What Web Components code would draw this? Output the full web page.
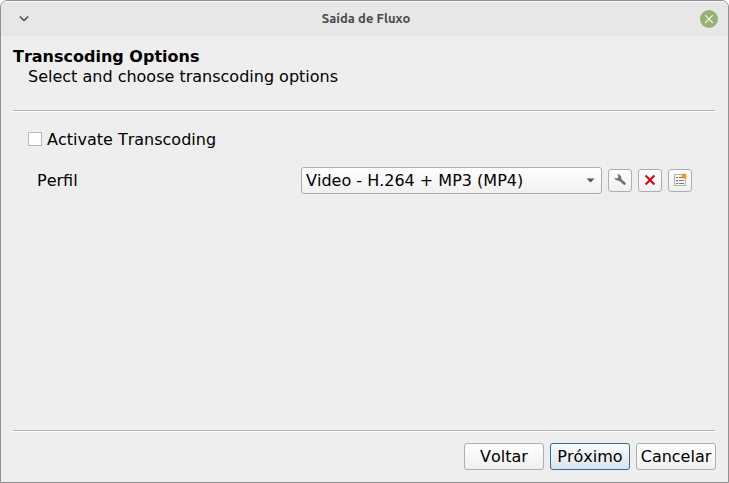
<!DOCTYPE html>
<html lang="pt">
<head>
<meta charset="utf-8">
<title>Saída de Fluxo</title>
<style>
html,body{margin:0;height:100%;overflow:hidden;background:#fff}
body{font:16px/20px "DejaVu Sans",sans-serif;font-kerning:none;color:#000}
</style>
</head>
<body>
<stream-wizard></stream-wizard>
<script>
const define = (name, html) => {
  const t = document.createElement('template');
  t.innerHTML = html;
  customElements.define(name, class extends HTMLElement {
    constructor() {
      super();
      this.attachShadow({ mode: 'open' }).append(t.content.cloneNode(true));
    }
  });
};

define('title-bar', `
<style>
:host{display:grid;grid-template-columns:46px 1fr 46px;align-items:center;height:35px;background:#e7e7e7;box-shadow:inset 0 1px #f9f9f9;box-sizing:border-box}
.t{text-align:center;font:600 13px/20px Ubuntu,"Noto Sans",sans-serif;letter-spacing:.05px;padding:0 0 2px 3px;color:#4a4a4a;white-space:nowrap}
svg{display:block}
.m{margin-left:17px}
.c{margin-left:18px}
</style>
<svg class="m" width="12" height="12" viewBox="0 0 12 12"><path d="M1.8 3.5l4.2 4 4.2-4" fill="none" stroke="#444" stroke-width="1.3"/></svg>
<div class="t"><slot></slot></div>
<svg class="c" width="18" height="18" viewBox="0 0 18 18"><circle cx="9" cy="9" r="9" fill="#92b372"/><path d="M5.2 5.2l7.6 7.6M12.8 5.2l-7.6 7.6" stroke="#fff" stroke-width="1.1"/></svg>`);

define('rule-line', `<style>:host{display:block;height:1px;background:#b4b4b4;border-bottom:1px solid #fff;margin:0 13px 0 12px}</style>`);

define('check-option', `
<style>
:host{display:flex;align-items:center;gap:5px;height:20px}
i{width:12px;height:12px;border:1px solid #b9b9b9;background:#fff}
span{padding-top:2px}
</style><i></i><span><slot></slot></span>`);

define('push-button', `
<style>
:host{display:flex;align-items:center;justify-content:center;box-sizing:border-box;width:80px;height:27px;border:1px solid #abaeb2;border-radius:3px;background:linear-gradient(#fff,#f0f0f0);white-space:nowrap}
:host([primary]){border-color:#306fa0;background:linear-gradient(#fbfcfd,#dae3eb)}
</style><span><slot></slot></span>`);

define('tool-button', `
<style>
:host{display:flex;align-items:center;justify-content:center;box-sizing:border-box;width:24px;height:23px;padding-bottom:1px;border:1px solid #abaeb2;border-radius:3px;background:linear-gradient(#fff,#f0f0f0)}
</style><slot></slot>`);

define('combo-box', `
<style>
:host{display:flex;align-items:center;justify-content:space-between;box-sizing:border-box;width:301px;height:27px;padding:0 6px 0 4px;border:1px solid #abaeb2;border-radius:3px;background:linear-gradient(#fff,#f0f0f0);white-space:nowrap}
</style><span><slot></slot></span><svg width="9" height="5" viewBox="0 0 9 5"><path d="M.5.5h8L4.5 4.6z" fill="#555"/></svg>`);

define('stream-wizard', `
<style>
:host{display:flex;flex-direction:column;box-sizing:border-box;width:729px;height:483px;border:1px solid #919191;border-radius:7px 7px 0 0;background:#eee;overflow:hidden}
header{height:74px;box-sizing:border-box;padding:11px 12px 0}
h1{font:bold 16px/20px "DejaVu Sans",sans-serif;font-kerning:none;margin:0}
p{margin:0 0 0 15px}
main{flex:1;padding:17px 36px 0 27px}
.row{display:flex;align-items:center;margin:18px 0 0 9px;height:27px}
.row span{width:264px}
.tools{display:flex;gap:6px;margin-left:6px}
footer{display:flex;justify-content:flex-end;gap:6px;height:50px;box-sizing:border-box;padding:11px 12px 0}
svg{display:block}
</style>
<title-bar>Saída de Fluxo</title-bar>
<header><h1>Transcoding Options</h1><p>Select and choose transcoding options</p></header>
<rule-line></rule-line>
<main>
<check-option>Activate Transcoding</check-option>
<div class="row"><span>Perfil</span><combo-box>Video - H.264 + MP3 (MP4)</combo-box>
<div class="tools">
<tool-button><svg width="12" height="12" viewBox="0 0 12 12"><path d="M5 4.8l5.3 4.8" stroke="#737373" stroke-width="2.7" stroke-linecap="round"/><path d="M3.2.3A3.6 3.6 0 0 1 7 5.4 3.8 3.8 0 0 1 .4 3.4L2.3 4.5 4 4 4.3 2.2z" fill="#737373"/></svg></tool-button>
<tool-button><svg width="12" height="12" viewBox="0 0 12 12"><path d="M1.6 1.6l8.8 8.8M10.4 1.6l-8.8 8.8" stroke="#d60b14" stroke-width="2.1"/></svg></tool-button>
<tool-button><svg width="14" height="14" viewBox="0 0 14 14"><rect x="1.5" y="1.5" width="11" height="11" fill="#f5f5f5" stroke="#b0b0b0"/><path d="M3 4.5h2M3 7.5h2M3 10.5h2M6 4.5h5M6 7.5h5M6 10.5h5" stroke="#777"/><circle cx="11" cy="3" r="2.6" fill="#ff9412"/></svg></tool-button>
</div></div>
</main>
<rule-line></rule-line>
<footer><push-button>Voltar</push-button><push-button primary>Próximo</push-button><push-button>Cancelar</push-button></footer>`);
</script>
</body>
</html>
